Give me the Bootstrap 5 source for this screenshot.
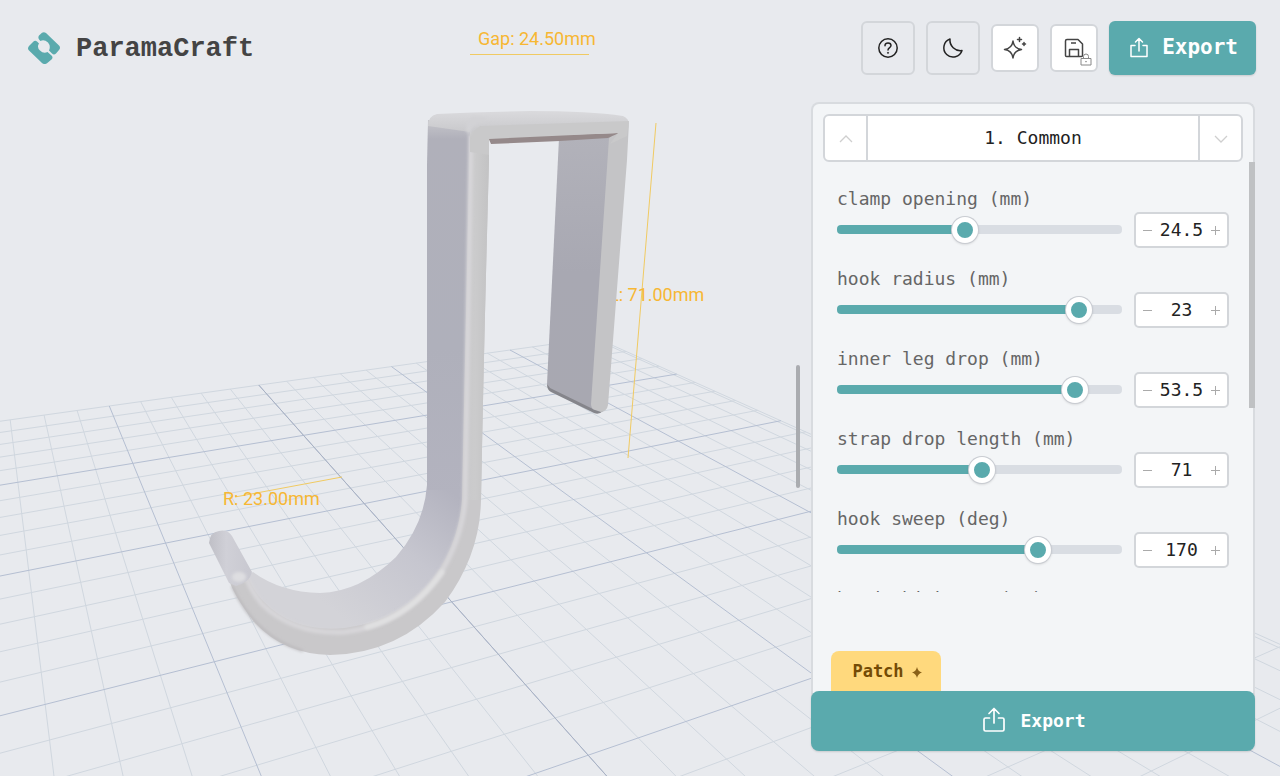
<!DOCTYPE html>
<html lang="en">
<head>
<meta charset="utf-8">
<meta name="viewport" content="width=device-width, initial-scale=1">
<title>ParamaCraft</title>
<link href="https://cdn.jsdelivr.net/npm/bootstrap@5.3.0/dist/css/bootstrap.min.css" rel="stylesheet">
<style>
  :root { --teal: #5aaaad; --line: #d3d6da; --panel: #f3f5f7; }
  body { background: #e8eaee; font-family: "DejaVu Sans Mono", monospace; font-size: 18px; color: #222; }
  button { font-family: inherit; color: #222; }
  .scene { z-index: 0; }
  .scene text { font-family: Roboto, sans-serif; font-size: 18px; fill: #f7b733; }
  .app-bar { padding: 21px 24px 27px 28px; }
  .tools { gap: 11px; }
  .brand-name { font-family: "Liberation Mono", monospace; font-size: 27px; font-weight: 700; color: #444; line-height: 32px; padding-top: 2px; }
  .tool { width: 54px; height: 54px; border: 2px solid var(--line); border-radius: 6px; background: transparent; color: #222; padding: 0; }
  .tool-sm { width: 48px; height: 48px; background: #fff; color: #444; }
  .export-top { height: 54px; padding: 0 18px; gap: 11px; border-radius: 6px; font-size: 21px; }
  .teal-btn { background: var(--teal); color: #fff; border: 0; font-weight: 700; box-shadow: 0 1px 2px #0002; }
  .workspace { gap: 11px; padding: 0 25px 25px 0; min-height: 0; }
  .grip { width: 4px; height: 123px; border-radius: 2px; background: #aaacb0; }
  .side { width: 444px; }
  .sheet { border: 2px solid #d8dbdf; border-bottom: 0; border-radius: 8px 8px 0 0; background: var(--panel); min-height: 0; }
  .pager { height: 48px; margin: 10px 10px 0; border: 2px solid var(--line); border-radius: 6px; background: #fff; }
  .pager button { border: 0; background: transparent; padding: 0 0 2px; }
  .pager .step { width: 43px; color: #cfcfcf; }
  .pager .step:first-child { border-right: 2px solid var(--line); }
  .pager .step:last-child { border-left: 2px solid var(--line); }
  .params { height: 430px; padding: 22px 24px 0; }
  .param { height: 80px; }
  .param-row { gap: 12px; }
  .param label { display: block; height: 28px; line-height: 30px; color: #666; }
  .thumb { width: 6px; height: 246px; right: -2px; top: 0; background: #bfc1c3; }
  .slide { -webkit-appearance: none; appearance: none; height: 28px; background: transparent; margin: 0 0 2px; min-width: 0; }
  .slide::-webkit-slider-runnable-track { height: 9px; border-radius: 4px; background: linear-gradient(to right, var(--teal) var(--fill), #d9dde3 var(--fill)); }
  .slide::-webkit-slider-thumb { -webkit-appearance: none; width: 26px; height: 26px; margin-top: -8px; border-radius: 50%; border: 5px solid #fff; background: var(--teal); box-shadow: 0 0 0 1px #c9ccd2, 0 1px 3px #0003; }
  .num { width: 95px; height: 36px; border: 2px solid var(--line); border-radius: 5px; background: #fff; }
  .num button { width: 23px; border: 0; background: transparent; padding: 0 0 2px; color: #aaa; line-height: 1; }
  .num input { width: 45px; border: 0; padding: 0 0 2px; background: transparent; text-align: center; color: #222; }
  .patch { width: 110px; height: 40px; margin-left: 18px; padding: 2px 0 0 2px; border: 0; border-radius: 8px 8px 0 0; background: #ffd97d; color: #744b05; font-size: 17px; font-weight: 700; }
  .export-main { height: 60px; gap: 14px; padding: 0 0 2px 2px; border-radius: 8px; margin-top: -8px; }
  .sheet-foot { padding-bottom: 8px; }
</style>
</head>
<body class="vh-100 overflow-hidden">
<svg class="scene position-absolute top-0 start-0 w-100 h-100" viewBox="0 0 1280 776" preserveAspectRatio="xMinYMin slice" role="img" aria-label="Hook model on a grid">
  <defs>
    <linearGradient id="side" gradientUnits="userSpaceOnUse" x1="0" y1="120" x2="0" y2="500"><stop offset="0" stop-color="#c6c6cb"/><stop offset=".05" stop-color="#b0b0ba"/><stop offset=".6" stop-color="#afb0bb"/><stop offset="1" stop-color="#b3b3bf"/></linearGradient>
    <linearGradient id="bowl" gradientUnits="userSpaceOnUse" x1="450" y1="490" x2="345" y2="620"><stop offset="0" stop-color="#b3b3bf"/><stop offset=".45" stop-color="#c6c6cf"/><stop offset="1" stop-color="#d3d3d8"/></linearGradient>
    <linearGradient id="face" x1="0" y1="0" x2="1" y2="0"><stop offset="0" stop-color="#c9c9cb"/><stop offset=".45" stop-color="#cbcbcc"/><stop offset="1" stop-color="#c3c3c4"/></linearGradient>
    <linearGradient id="cap" x1="0" y1="0" x2="0" y2="1"><stop offset="0" stop-color="#dadadd"/><stop offset="1" stop-color="#c7c7ca"/></linearGradient>
    <linearGradient id="tip" x1="0" y1="0" x2="1" y2="0"><stop offset="0" stop-color="#bfbfc6"/><stop offset=".4" stop-color="#d0d0d7"/><stop offset="1" stop-color="#c8c8d0"/></linearGradient>
    <linearGradient id="far" x1="0" y1="0" x2="0" y2="1"><stop offset="0" stop-color="#b2b2ba"/><stop offset=".5" stop-color="#a8a8b2"/><stop offset="1" stop-color="#a8a8b1"/></linearGradient>
    <filter id="soft" filterUnits="userSpaceOnUse" x="190" y="90" width="460" height="590"><feGaussianBlur stdDeviation="1.500"/></filter>
  </defs>
  <g id="grid" fill="none"></g>

  <!-- dimension lines and labels -->
  <path fill="none" stroke="#f0ca62" d="M470 54.500H589M656 123L628 458M235 497L342 477"/>
  <text x="478" y="45">Gap: 24.50mm</text>
  <text x="609" y="301">L: 71.00mm</text>
  <text x="223" y="505">R: 23.00mm</text>

  <!-- short leg -->
  <path fill="#85858b" d="M547 384Q547 390 551 392L592 412Q598 416 603 411L604 404L592 400Z"/>
  <path fill="url(#far)" d="M559 138L611 136L601 409L594 409.500L550 388L547 384Z"/>
  <path fill="#c4c4c6" d="M609 138L629 122L627 160L608 405Q607 411 601 412L595 410Q591 409 591 404Z"/>
  <!-- long leg and bowl -->
  <path fill="url(#bowl)" d="M427 485Q424 525 396 557Q360 592 320 593Q280 592 253 572L245 577Q256 628 307 640Q370 645 420 602Q463 560 465 485Z"/>
  <path fill="url(#side)" d="M428 120L472 124L466 490L427 490V165Z"/>
  <path fill="#c9c8ca" d="M470 130L489 140L489 160Q484 340 481 500Q480 555 445 602Q398 654 330 655Q284 654 255 623Q232 594 228 576L244 568Q252 590 264 602Q294 633 345 628Q405 620 437 573Q459 540 462 500Z"/>
  <path fill="none" stroke="#b9b7ba" stroke-width="2" filter="url(#soft)" d="M232 586Q255 637 303 651"/>
  <path fill="url(#face)" d="M470 128L489 140L489 160Q484 340 481 500L464 500Q470 300 470 128Z"/>
  <path fill="none" stroke="#d7d6d9" stroke-width="5" filter="url(#soft)" d="M471 135L465 500Q462 538 440 574Q403 625 345 632Q294 635 262 604Q252 592 247 579"/>
  <path fill="none" stroke="#e0e0e1" stroke-width="5" stroke-linecap="round" filter="url(#soft)" d="M442 572Q412 615 367 627"/>
  <path fill="url(#tip)" d="M209 543Q210 532 219 531Q227 529 232 536L252 572Q250 582 236 586L229 583Z"/>
  <ellipse cx="239" cy="577" rx="7" ry="5" fill="#dedee1" filter="url(#soft)"/>
  <!-- top bridge -->
  <path fill="#95898a" d="M488 137L619 133L608 138L560 141L491 144Z"/>
  <path fill="url(#cap)" d="M428 126Q428 116 437 114Q480 112 530 111Q590 111 623 116Q629 118 629 126L476 134L470 132Z"/>
  <path fill="#c9c9ca" d="M470 134L480 126L629 121L627 136L610 144L618 133L489 139V155L470 152Z"/>
  <path fill="#d2d2d5" d="M470 136Q471 124 482 122L490 118L473 116Q466 120 466 131Z" filter="url(#soft)"/>
</svg>

<div class="position-relative d-flex flex-column h-100">
  <header class="app-bar d-flex align-items-center">
    <a href="#" class="d-flex align-items-center text-decoration-none">
      <svg width="32" height="32" viewBox="0 0 32 32" fill="#5aaaad" aria-hidden="true">
        <path d="M11 3.500L14 .8Q16 -.6 18 1L31 13.500Q33 15.500 31 18L28 21.500Q26 23.500 24 21.500L21 18.500Q23 14 20 10.500Q16 7 12.500 9L11.500 8Q9.500 6 11 3.500Z"/>
        <path d="M5 10Q7 8 9 9.500L11 11.500Q8.500 15 12 18.500Q15.500 22 19.500 20L23.500 23.500Q25.500 25.500 23.500 27.500L19 31.200Q16.500 33 14 31L1 18.500Q-1 16.500 1 14Z"/>
      </svg>
      <span class="brand-name ms-3">ParamaCraft</span>
    </a>
    <div class="tools d-flex align-items-center ms-auto">
      <button class="tool d-flex align-items-center justify-content-center" aria-label="Help">
        <svg width="22" height="22" viewBox="0 0 22 22" fill="none" stroke="currentColor" stroke-width="1.500"><circle cx="11" cy="11" r="9.200"/><path d="M8 8.700C8 6.900 9.300 6 11 6S14 7 14 8.600C14 10.600 11 10.600 11 13" stroke-linecap="round"/><circle cx="11" cy="15.800" r=".6" fill="currentColor" stroke-width=".8"/></svg>
      </button>
      <button class="tool d-flex align-items-center justify-content-center" aria-label="Dark mode">
        <svg width="22" height="22" viewBox="0 0 22 22" fill="none" stroke="currentColor" stroke-width="1.500" stroke-linejoin="round"><path d="M8 2A10.500 10.500 0 0 0 20 13.500A9.300 9.300 0 1 1 8 2Z"/></svg>
      </button>
      <button class="tool tool-sm d-flex align-items-center justify-content-center" aria-label="Generate">
        <svg width="24" height="24" viewBox="0 0 24 24" fill="none" stroke="currentColor" stroke-width="1.500" stroke-linejoin="round" stroke-linecap="round"><path d="M10 5Q11 12.500 18.500 13.500Q11 14.500 10 22Q9 14.500 1.500 13.500Q9 12.500 10 5ZM16.500 1.500V5.500M14.500 3.500H18.500M21 6.500V9.500M19.500 8H22.500"/></svg>
      </button>
      <button class="tool tool-sm position-relative d-flex align-items-center justify-content-center" aria-label="Save, locked">
        <svg width="20" height="20" viewBox="0 0 20 20" fill="none" stroke="currentColor" stroke-width="1.500" stroke-linejoin="round"><path d="M3 1.500H14L18.500 6V17.500Q18.500 18.500 17.500 18.500H2.500Q1.500 18.500 1.500 17.500V3Q1.500 1.500 3 1.500ZM5.500 18V11.500H14.500V18M7 5H12"/></svg>
        <svg class="position-absolute end-0 bottom-0 m-1" width="12" height="13" viewBox="0 0 12 13" fill="#fff" stroke="#888"><path d="M1 5.500H11V12H1ZM3.500 5.500V3.500Q3.500 1 6 1T8.500 3.500V5.500"/><circle cx="6" cy="8.700" r=".4"/></svg>
      </button>
      <button class="teal-btn export-top d-flex align-items-center">
        <svg width="24" height="24" viewBox="0 0 24 24" fill="none" stroke="currentColor" stroke-width="1.500" stroke-linecap="round" stroke-linejoin="round" aria-hidden="true"><path d="M8 9.500H4V20.500H20V9.500H16M12 15V2.500M8.500 6L12 2.500L15.500 6"/></svg>
        Export
      </button>
    </div>
  </header>

  <main class="workspace d-flex flex-grow-1 justify-content-end align-items-center">
    <div class="grip" role="separator" aria-label="Resize panel"></div>
    <section class="side d-flex flex-column align-self-stretch">
      <div class="sheet d-flex flex-column flex-grow-1">
        <div class="pager d-flex">
          <button class="step" aria-label="Previous group"><svg width="14" height="8" viewBox="0 0 14 8" fill="none" stroke="currentColor" stroke-width="1.300"><path d="M1 7L7 1L13 7"/></svg></button>
          <button class="flex-grow-1">1. Common</button>
          <button class="step" aria-label="Next group"><svg width="14" height="8" viewBox="0 0 14 8" fill="none" stroke="currentColor" stroke-width="1.300"><path d="M1 1L7 7L13 1"/></svg></button>
        </div>
        <div class="position-relative">
          <div class="params overflow-hidden" id="params"></div>
          <div class="thumb position-absolute"></div>
        </div>
        <div class="sheet-foot mt-auto d-flex">
          <button class="patch">Patch<svg width="10" height="11" viewBox="0 0 10 11" fill="#8a6118" class="ms-2" aria-hidden="true"><path d="M5 0Q6 4.500 10 5.500Q6 6.500 5 11Q4 6.500 0 5.500Q4 4.500 5 0Z"/></svg></button>
        </div>
      </div>
      <button class="teal-btn export-main d-flex align-items-center justify-content-center position-relative">
        <svg width="24" height="26" viewBox="0 0 24 26" fill="none" stroke="currentColor" stroke-width="1.700" stroke-linecap="round" stroke-linejoin="round" aria-hidden="true"><path d="M7.500 11H3.500Q2 11 2 12.500V22.500Q2 24 3.500 24H20.500Q22 24 22 22.500V12.500Q22 11 20.500 11H16.500M12 16V1.500M7 6.500L12 1.500L17 6.500"/></svg>
        Export
      </button>
    </section>
  </main>
</div>

<script src="https://cdn.jsdelivr.net/npm/bootstrap@5.3.0/dist/js/bootstrap.bundle.min.js"></script>
<script>
  // Floor grid: unit cells projected through the camera, a heavier line every five
  const project = (u, v) => {
    const s = u / 15, t = v / 15, w = 1 + 0.19007 * s - 0.42177 * t;
    return ((109.3 + 497.63 * s + 14.61 * t) / w).toFixed(1) + ' ' + ((406 + 10.52 * s - 23.38 * t) / w).toFixed(1);
  };
  const U0 = -9, U1 = 19, V0 = 0, V1 = 27;
  let minor = '', major = '';
  for (let u = U0; u <= U1; u++) {
    const d = `M${project(u, V0)}L${project(u, V1)}`;
    u % 5 === 0 ? major += d : minor += d;
  }
  for (let v = V0; v <= V1; v++) {
    const d = `M${project(U0, v)}L${project(U1, v)}`;
    v && v % 5 === 0 ? major += d : minor += d;
  }
  minor += `M${project(18.85, V0)}L${project(18.85, V1)}`;
  document.getElementById('grid').innerHTML =
    `<path d="${minor}" stroke="#d0d7df"/><path d="${major}" stroke="#b5bfd2"/><path d="M${project(5, V0)}L${project(5, V1)}" stroke="#a9b2c4"/>`;

  // Parameter sliders
  const params = [
    ['clamp opening (mm)', 24.5, 55], ['hook radius (mm)', 23, 26], ['inner leg drop (mm)', 53.5, 61.5],
    ['strap drop length (mm)', 71, 139.5], ['hook sweep (deg)', 170, 234], ['band thickness (mm)', 4, 10]
  ];
  document.getElementById('params').innerHTML = params.map(([name, value, max], i) => `
    <div class="param">
      <label for="p${i}">${name}</label>
      <div class="param-row d-flex align-items-center">
        <input class="slide flex-grow-1" type="range" id="p${i}" min="0" max="${max}" step="0.5" value="${value}" style="--fill:${value / max * 100}%">
        <div class="num d-flex align-items-stretch">
          <button aria-label="Decrease ${name}"><svg width="9" height="9" viewBox="0 0 9 9" stroke="currentColor"><path d="M0 4.500H9"/></svg></button>
          <input type="text" value="${value}" aria-label="${name} value">
          <button aria-label="Increase ${name}"><svg width="9" height="9" viewBox="0 0 9 9" stroke="currentColor"><path d="M0 4.500H9M4.500 0V9"/></svg></button>
        </div>
      </div>
    </div>`).join('');
  document.querySelectorAll('.slide').forEach(s => s.addEventListener('input', () => {
    s.style.setProperty('--fill', s.value / s.max * 100 + '%');
    s.parentElement.querySelector('.num input').value = s.value;
  }));
</script>
</body>
</html>
